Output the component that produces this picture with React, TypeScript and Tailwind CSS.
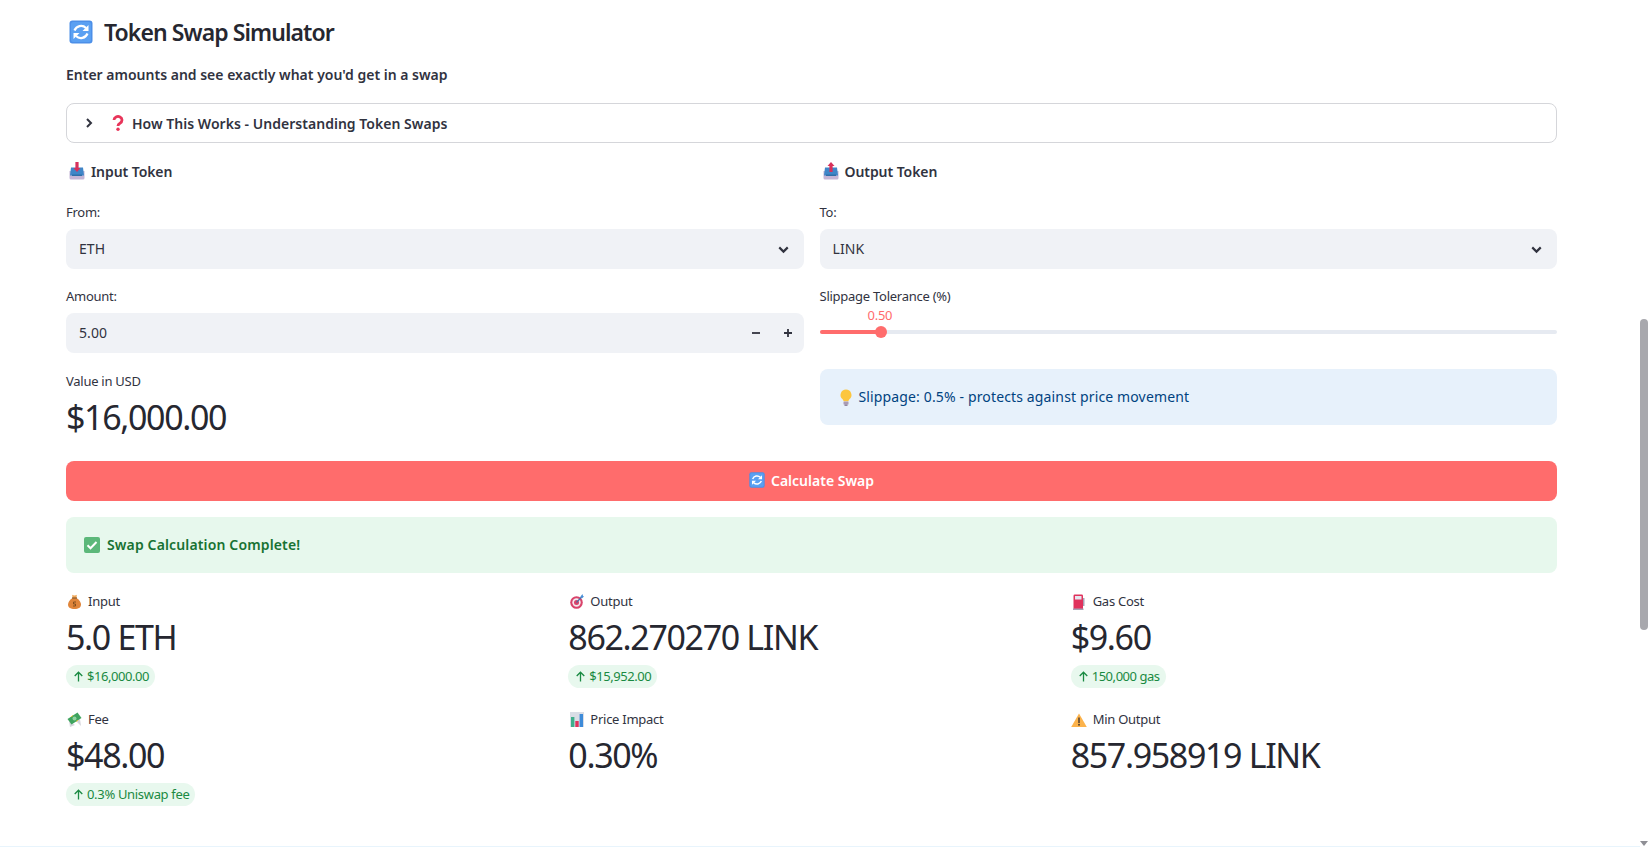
import React from "react";

const Refresh = ({ s = 16 }: { s?: number }) => (
  <svg width={s} height={s} viewBox="0 0 24 24" className="shrink-0">
    <rect x="0.5" y="0.5" width="23" height="23" rx="3" fill="#4c8fe8" />
    <rect x="2" y="2" width="20" height="20" rx="2" fill="#5aa0f2" />
    <path d="M5.5 10.5A7 7 0 0 1 17 8" fill="none" stroke="#fff" strokeWidth="2.2" />
    <path d="M19.5 5v6h-6z" fill="#fff" />
    <path d="M18.5 13.5A7 7 0 0 1 7 16" fill="none" stroke="#fff" strokeWidth="2.2" />
    <path d="M4.5 19v-6h6z" fill="#fff" />
  </svg>
);
const Question = () => (
  <svg width="14" height="16" viewBox="0 0 14 16" className="shrink-0">
    <path d="M3 5a4 3.6 0 1 1 6 3.2C7.6 9 7 9.6 7 11" fill="none" stroke="#e8355a" strokeWidth="2.8" />
    <circle cx="7" cy="14.2" r="1.7" fill="#e8355a" />
  </svg>
);
const Tray = ({ up = false }: { up?: boolean }) => (
  <svg width="16" height="18" viewBox="0 0 16 18" className="shrink-0">
    <path d="M0.500 9h15v7a1.500 1.500 0 0 1-1.500 1.500H2A1.500 1.500 0 0 1 .5 16z" fill="#c4b5d6" />
    <path d="M2 5.500h12l1 8H1z" fill="#3f86c8" />
    <rect x="3" y="12.500" width="10" height="1.500" fill="#2f6ea8" />
    {up ? <path d="M8 0l3.500 4H9.600v6H6.400V4H4.500z" fill="#d8315b" /> : <path d="M6.400 0h3.200v6h1.900L8 10 4.500 6h1.900z" fill="#d8315b" />}
  </svg>
);
const Bulb = () => (
  <svg width="14" height="17" viewBox="0 0 14 17" className="shrink-0">
    <path d="M7 0.5a5.5 5.5 0 0 1 3.4 9.8c-.6.6-.9 1.2-.9 2H4.500c0-.8-.3-1.400-.9-2A5.5 5.5 0 0 1 7 .5z" fill="#fcc63f" />
    <rect x="4.500" y="12.500" width="5" height="3" rx=".6" fill="#a99bb5" />
    <rect x="5.500" y="15.500" width="3" height="1.300" fill="#7d6f8a" />
  </svg>
);
const Check = () => (
  <svg width="16" height="16" viewBox="0 0 16 16" className="shrink-0">
    <rect width="16" height="16" rx="2" fill="#5cb87a" />
    <path d="M3.500 8.200l3 3 6-6.200" fill="none" stroke="#fff" strokeWidth="2" />
  </svg>
);
const Bag = () => (
  <svg width="13" height="15" viewBox="0 0 13 15" className="shrink-0">
    <path d="M4.500 4C1.500 6 0 8.500 0 10.500 0 13.500 2.500 15 6.500 15s6.500-1.500 6.500-4.500C13 8.500 11.500 6 8.500 4z" fill="#e0853a" />
    <path d="M4.200 .8C5.500 1.600 7.500 1.600 8.800.8L8.500 4h-4z" fill="#f0a858" />
    <rect x="4" y="3.400" width="5" height="1.200" fill="#8a5a2b" />
    <path d="M8 8H5.500v2H7.500v2H5" fill="none" stroke="#7a4a1c" strokeWidth=".9" />
  </svg>
);
const Target = () => (
  <svg width="14" height="15" viewBox="0 0 14 15" className="shrink-0">
    <circle cx="6.500" cy="8.500" r="6.300" fill="#d9436b" />
    <circle cx="6.500" cy="8.500" r="4.200" fill="#f4e9ee" />
    <circle cx="6.500" cy="8.500" r="2.500" fill="#d9436b" />
    <path d="M6.500 8.500L12 2.500" stroke="#4a6fa5" strokeWidth="1.200" />
    <path d="M10.500 2.500L12.500 0l.5 2 1 .5-2.200 2z" fill="#4a90d9" />
  </svg>
);
const Pump = () => (
  <svg width="12" height="16" viewBox="0 0 12 16" className="shrink-0">
    <rect x="0.500" y="0.500" width="9.500" height="15" rx="1.200" fill="#e0325c" />
    <rect x="2" y="2" width="6.500" height="3.500" fill="#e6e6ef" />
    <rect x="10" y="4" width="1.500" height="8" fill="#a7a2b5" />
    <rect x="0" y="14.500" width="10.500" height="1.500" fill="#a7a2b5" />
  </svg>
);
const Money = () => (
  <svg width="15" height="15" viewBox="0 0 15 15" className="shrink-0">
    <path d="M2 9l1 6 5-2z" fill="#d5d5dc" />
    <path d="M9 9l5 5-1-7z" fill="#d5d5dc" />
    <path d="M0.500 7L10.500 0.500 14.500 6 4.500 12.500z" fill="#3fa45f" />
    <circle cx="7.500" cy="6.500" r="2" fill="#8ed49f" />
    <path d="M4 4.800l2-1.300M9 9.500l2-1.300" stroke="#d9c23c" strokeWidth="1" />
  </svg>
);
const Chart = () => (
  <svg width="14" height="15" viewBox="0 0 14 15" className="shrink-0">
    <rect width="14" height="15" fill="#d9dde6" />
    <rect x="1" y="5" width="3.400" height="10" fill="#3fae8c" />
    <rect x="5.300" y="9" width="3.400" height="6" fill="#e0325c" />
    <rect x="9.600" y="2" width="3.400" height="13" fill="#3d8bd9" />
  </svg>
);
const Warn = () => (
  <svg width="16" height="14" viewBox="0 0 16 14" className="shrink-0">
    <path d="M8 0.500L15.800 14H0.200z" fill="#fcb34c" />
    <rect x="7.200" y="4.500" width="1.600" height="5.500" fill="#5a4632" />
    <circle cx="8" cy="11.800" r="1" fill="#5a4632" />
  </svg>
);
const Chevron = () => (
  <svg width="17" height="17" viewBox="0 0 24 24" fill="none" stroke="#31333f" strokeWidth="3" className="shrink-0">
    <path d="M6 9l6 6 6-6" />
  </svg>
);

const FONT = "font-['Noto_Sans',sans-serif]";
const LABEL = "text-[13px] leading-[17px] tracking-[-0.02em] text-[#31333f]";
const BIG = "text-[34px] leading-[44px] tracking-[-0.04em] text-[#262730]";
const HEAD = "h-[22px] flex items-center gap-[6px] pl-[3px] text-[14px] font-semibold tracking-[-0.005em] text-[#31333f]";

function Field({ label, className = "", children }: { label: string; className?: string; children: React.ReactNode }) {
  return (
    <div className={className}>
      <div className={LABEL}>{label}</div>
      {children}
    </div>
  );
}

function Select({ value }: { value: string }) {
  return (
    <div className="mt-[8px] h-10 rounded-lg bg-[#f0f2f6] pl-[13px] pr-[12px] flex items-center justify-between text-[14px] tracking-[0.005em] text-[#31333f]">
      <span className="-mt-[2px]">{value}</span>
      <Chevron />
    </div>
  );
}

function Metric({ icon, label, value, delta, wide = false }: { icon: React.ReactNode; label: string; value: string; delta?: string; wide?: boolean }) {
  return (
    <div className="h-[118px] pt-[1px]">
      <div className={`flex items-center gap-[6px] pl-[1px] ${LABEL}`}>
        <span className="w-[15px] flex justify-center">{icon}</span>
        <span>{label}</span>
      </div>
      <div className={`${BIG} mt-[5px]`}>{value}</div>
      {delta && (
        <div className={`mt-[6px] inline-flex items-center gap-[2px] h-[23px] px-[6px] rounded-full bg-[#e8f8ee] text-[13px] text-[#1a8a42] ${wide ? "tracking-[-0.025em]" : "tracking-[-0.035em]"}`}>
          <svg width="13" height="13" viewBox="0 0 24 24" fill="none" stroke="#1a8a42" strokeWidth="2.4">
            <path d="M12 21V4M5 11l7-7 7 7" />
          </svg>
          <span>{delta}</span>
        </div>
      )}
    </div>
  );
}

export default function App() {
  return (
    <div className={`h-[847px] w-full overflow-hidden flex bg-white ${FONT}`}>
      <main className="flex-1 min-w-0 pl-[66px] pr-[83px] border-b border-[#e8f4fc]">
        <div className="pt-[19px] h-[61px] flex items-start pl-[3px] gap-[11px]">
          <span className="mt-[1px]"><Refresh s={24} /></span>
          <h1 className="text-[23px] leading-[26px] font-semibold tracking-[-0.04em] text-[#262730]">Token Swap Simulator</h1>
        </div>
        <p className="mt-[4px] text-[14px] leading-[20px] font-semibold text-[#31333f]">Enter amounts and see exactly what you'd get in a swap</p>
        <div className="mt-[18px] h-10 rounded-lg border border-[#d5d6da] flex items-center pl-[14px] gap-[13px]">
          <svg width="16" height="16" viewBox="0 0 24 24" fill="none" stroke="#31333f" strokeWidth="3"><path d="M9 6l6 6-6 6" /></svg>
          <span className="ml-[1px]"><Question /></span>
          <span className="-ml-[6px] text-[14px] font-semibold tracking-[0.002em] text-[#31333f]">How This Works - Understanding Token Swaps</span>
        </div>
        <div className="mt-[17px] grid grid-cols-2 gap-[16px]">
          <div>
            <div className={HEAD}><Tray /><span>Input Token</span></div>
            <Field label="From:" className="mt-[22px]"><Select value="ETH" /></Field>
            <Field label="Amount:" className="mt-[19px]">
              <div className="mt-[8px] h-10 rounded-lg bg-[#f0f2f6] pl-[13px] flex items-center text-[14px] tracking-[0.005em] text-[#31333f]">
                <span className="flex-1 -mt-[2px]">5.00</span>
                <span className="w-[32px] flex justify-center">
                  <svg width="12" height="12" viewBox="0 0 24 24" stroke="#31333f" strokeWidth="3.6"><path d="M4 12h16" /></svg>
                </span>
                <span className="w-[32px] flex justify-center">
                  <svg width="12" height="12" viewBox="0 0 24 24" stroke="#31333f" strokeWidth="3.6"><path d="M4 12h16M12 4v16" /></svg>
                </span>
              </div>
            </Field>
            <div className={`mt-[20px] ${LABEL}`}>Value in USD</div>
            <div className={`${BIG} mt-[5px]`}>$16,000.00</div>
          </div>
          <div>
            <div className={HEAD}><Tray up /><span>Output Token</span></div>
            <Field label="To:" className="mt-[22px]"><Select value="LINK" /></Field>
            <Field label="Slippage Tolerance (%)" className="mt-[19px]">
              <div className="h-[40px] relative">
                <div className="absolute left-[48px] top-[2px] text-[13px] leading-[17px] tracking-[-0.02em] text-[#ff6c6c]">0.50</div>
                <div className="absolute left-0 right-0 top-[25px] h-1 rounded-full bg-[#e6eaf1] overflow-hidden">
                  <div className="h-full w-[61px] bg-[#ff6c6c]" />
                </div>
                <div className="absolute left-[55px] top-[21px] w-3 h-3 rounded-full bg-[#ff6c6c]" />
              </div>
            </Field>
            <div className="mt-[24px] h-[56px] rounded-lg bg-[#e7f1fb] pl-[19px] flex items-center gap-[6px] text-[14px] tracking-[0.01em] text-[#004280]">
              <Bulb /><span className="-mt-[2px]">Slippage: 0.5% - protects against price movement</span>
            </div>
          </div>
        </div>
        <button className="mt-[22px] block w-full h-10 rounded-lg bg-[#ff6c6c] text-white text-[14px] font-semibold">
          <span className="inline-flex items-center gap-[6px]"><Refresh s={16} /><span className="mt-[1px]">Calculate Swap</span></span>
        </button>
        <div className="mt-[16px] h-[56px] rounded-lg bg-[#e7f8ed] pl-[18px] flex items-center gap-[7px] text-[14px] font-semibold tracking-[0.01em] text-[#177233]">
          <Check /><span className="-mt-[2px]">Swap Calculation Complete!</span>
        </div>
        <div className="mt-[19px] grid grid-cols-3 gap-x-[16px]">
          <Metric icon={<Bag />} label="Input" value="5.0 ETH" delta="$16,000.00" />
          <Metric icon={<Target />} label="Output" value="862.270270 LINK" delta="$15,952.00" />
          <Metric icon={<Pump />} label="Gas Cost" value="$9.60" delta="150,000 gas" />
          <Metric icon={<Money />} label="Fee" value="$48.00" delta="0.3% Uniswap fee" wide />
          <Metric icon={<Chart />} label="Price Impact" value="0.30%" />
          <Metric icon={<Warn />} label="Min Output" value="857.958919 LINK" />
        </div>
      </main>
      <aside className="w-2 shrink-0 flex flex-col items-center">
        <div className="mt-[319px] h-[311px] w-2 rounded-full bg-[#a8a8ad]" />
        <svg className="mt-[211px]" width="8" height="5" viewBox="0 0 8 5"><path d="M0 0h8L4 5z" fill="#8f8f95" /></svg>
      </aside>
    </div>
  );
}
